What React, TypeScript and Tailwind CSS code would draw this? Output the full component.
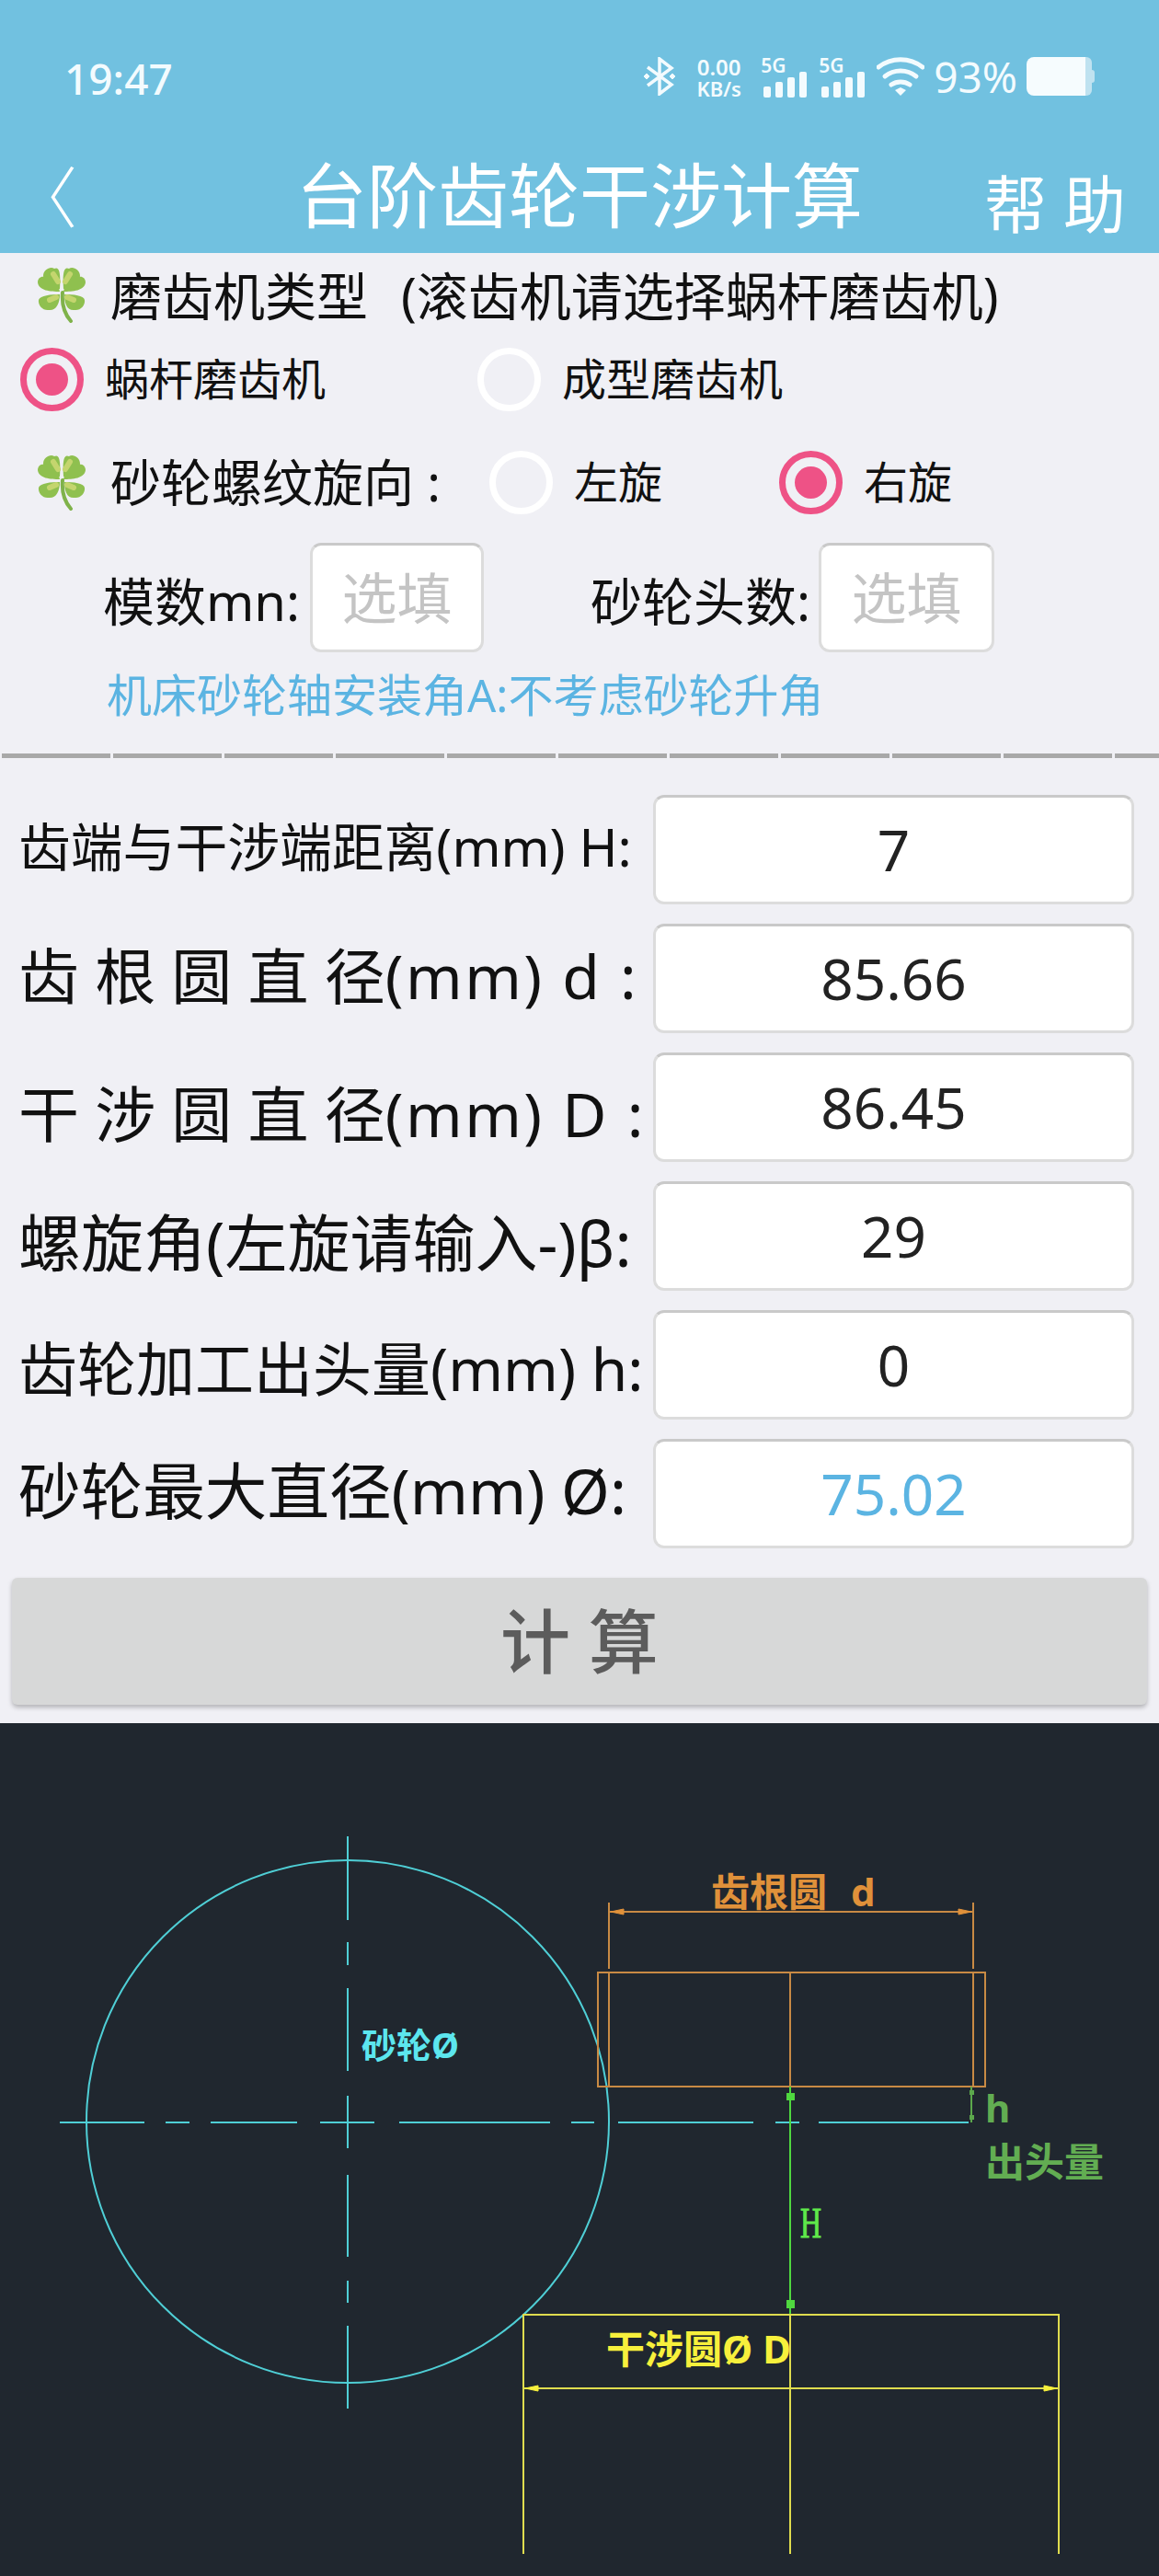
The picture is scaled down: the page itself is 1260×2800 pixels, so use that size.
const FONT = "font-['Noto_Sans','Noto_Sans_CJK_SC',sans-serif]";

const Clover = () => (
  <svg width="52" height="61" viewBox="0 0 52 61" className="shrink-0">
    <path d="M27 28 C26 40 28 50 36 59" fill="none" stroke="#7fb24a" strokeWidth="4" strokeLinecap="round" />
    <g>
      <path d="M24 24 C14 24 6 17 6 10 C6 3 14 -1 18 2 C24 -1 25 8 24 24Z" fill="#8fc04f" />
      <path d="M28 24 C38 24 46 17 46 10 C46 3 38 -1 34 2 C28 -1 27 8 28 24Z" fill="#8fc04f" />
      <path d="M24 27 C14 27 1 26 0 17 C0 12 4 10 7 11 C14 9 22 16 24 27Z" fill="#8fc04f" />
      <path d="M28 27 C38 27 51 26 52 17 C52 12 48 10 45 11 C38 9 30 16 28 27Z" fill="#8fc04f" />
      <path d="M24 30 C14 30 3 31 1 36 C0 42 6 48 12 47 C20 48 24 40 24 30Z" fill="#8fc04f" />
      <path d="M29 30 C39 30 50 31 51 36 C52 42 46 48 40 47 C32 48 29 40 29 30Z" fill="#8fc04f" />
      <path d="M17 8 L22 16 M13 36 L20 33 M35 8 L30 16 M39 36 L32 33" stroke="#c4d56e" strokeWidth="6" strokeLinecap="round" />
    </g>
  </svg>
);

const Radio = ({ on }: { on?: boolean }) => (
  <div
    className={
      on
        ? "w-[69px] h-[69px] shrink-0 rounded-full border-[7px] border-[#ee5286] bg-[#f0f0f5] flex items-center justify-center"
        : "w-[69px] h-[69px] shrink-0 rounded-full border-[7px] border-white bg-[#f0f0f5]"
    }
  >
    {on && <div className="w-[35px] h-[35px] rounded-full bg-[#ee5286]" />}
  </div>
);

const Bars = () => (
  <div className="w-[46px] relative h-[43px]">
    <span className="absolute left-0 top-[-1px] text-[21px] leading-[21px] font-semibold text-[#f3fbfe]">5G</span>
    <div className="absolute left-[3px] bottom-[-1px] flex items-end gap-[5px]">
      <div className="w-[8px] h-[12px] rounded-[2px] bg-[#f3fbfe]" />
      <div className="w-[8px] h-[17px] rounded-[2px] bg-[#f3fbfe]" />
      <div className="w-[8px] h-[22px] rounded-[2px] bg-[#f3fbfe]" />
      <div className="w-[8px] h-[28px] rounded-[2px] bg-[#f3fbfe]" />
    </div>
  </div>
);

const StatusBar = () => (
  <div className="h-[150px] pl-[70px] pr-[70px] pt-[60px] flex items-start justify-between text-[#f3fbfe]">
    <span className="text-[46px] leading-[50px] font-medium">19:47</span>
    <div className="flex items-center h-[46px]">
      <svg width="36" height="42" viewBox="0 0 36 42" fill="none" stroke="#f3fbfe" strokeWidth="3.5">
        <path d="M5 11 L31 30 L18 40 V2 L31 12 L5 31" />
        <path d="M1 21 L4 18 L7 21 L4 24Z M29 21 L32 18 L35 21 L32 24Z" fill="#f3fbfe" strokeWidth="1" />
      </svg>
      <div className="ml-[20px] w-[53px] flex flex-col items-center font-semibold">
        <span className="text-[24px] leading-[25px]">0.00</span>
        <span className="text-[22px] leading-[22px]">KB/s</span>
      </div>
      <div className="ml-[19px]"><Bars /></div>
      <div className="ml-[17px]"><Bars /></div>
      <svg className="ml-[17px]" width="52" height="42" viewBox="0 0 52 42" fill="none" stroke="#f3fbfe" strokeWidth="5" strokeLinecap="round">
        <path d="M2 11 C16 0 36 0 50 11" />
        <path d="M9 21 C19 13 33 13 43 21" />
        <path d="M16 30 C22 26 30 26 36 30" />
        <path d="M20 36 L26 33 L32 36 L26 42Z" fill="#f3fbfe" stroke="none" />
      </svg>
      <span className="ml-[10px] text-[46px] leading-[46px]">93%</span>
      <div className="ml-[10px] flex items-center">
        <div className="w-[64px] h-[42px] rounded-l-[8px] bg-[#f6fcfe]" />
        <div className="w-[7px] h-[42px] rounded-r-[6px] bg-[#bfe2f0]" />
        <div className="w-[3px] h-[14px] rounded-r-[3px] bg-[#bfe2f0]" />
      </div>
    </div>
  </div>
);

const Header = () => (
  <div className="h-[125px] relative flex items-start justify-center text-white">
    <span className="absolute left-[12px] top-[18px] text-[72px] leading-[90px] font-light">〈</span>
    <span className="text-[77px] leading-[126px]">台阶齿轮干涉计算</span>
    <span className="absolute right-[36px] top-[27px] text-[68px] leading-[90px]">帮 助</span>
  </div>
);

// nudge = per-row text offset, the labels don't sit centred in the reference
const fieldRows = [
  { label: "齿端与干涉端距离(mm) H:", value: "7", size: "text-[56.8px]", nudge: "pb-[6px]" },
  { label: "齿 根 圆 直 径", tail: "(mm) d :", value: "85.66", size: "text-[66px]", nudge: "pb-[6px]" },
  { label: "干 涉 圆 直 径", tail: "(mm) D :", value: "86.45", size: "text-[66px]", nudge: "pt-[14px]" },
  { label: "螺旋角(左旋请输入-)β:", value: "29", size: "text-[68px]", nudge: "pt-[14px]" },
  { label: "齿轮加工出头量(mm) h:", value: "0", size: "text-[64px]", nudge: "pt-[8px]" },
  { label: "砂轮最大直径(mm) Ø:", value: "75.02", size: "text-[67.6px]", nudge: "pb-[6px]", blue: true },
];

const InputBox = ({ className, children }: { className: string; children: React.ReactNode }) => (
  <div className={"bg-white rounded-[12px] border-[3px] border-[#dcdcdc] border-t-[#c9c9c9] flex items-center justify-center " + className}>
    {children}
  </div>
);

const DashedRule = () => (
  <div className="h-[5px] mt-[34px] flex gap-[3px] pl-[2px] overflow-hidden">
    {Array.from({ length: 11 }).map((_, i) => (
      <div key={i} className="w-[118px] h-[5px] shrink-0 bg-[#a8a8a8]" />
    ))}
  </div>
);

const Form = () => (
  <div className="h-[1598px] bg-[#f0f0f5] text-[#111]">
    <div className="h-[97px] pl-[41px] pt-[15px] flex items-start">
      <Clover />
      <span className="ml-[27px] text-[56px] leading-[62px] whitespace-pre">
        磨齿机类型<span className="ml-[36px]">(滚齿机请选择蜗杆磨齿机)</span>
      </span>
    </div>
    <div className="h-[80px] pl-[22px] flex items-center">
      <Radio on />
      <span className="ml-[23px] w-[405px] text-[48px]">蜗杆磨齿机</span>
      <Radio />
      <span className="ml-[23px] text-[48px]">成型磨齿机</span>
    </div>
    <div className="mt-[37px] h-[70px] pl-[41px] flex items-center">
      <Clover />
      <span className="ml-[27px] w-[412px] text-[55px] leading-[62px]">砂轮螺纹旋向 :</span>
      <Radio />
      <span className="ml-[23px] w-[223px] text-[48px]">左旋</span>
      <Radio on />
      <span className="ml-[23px] text-[48px]">右旋</span>
    </div>
    <div className="mt-[31px] h-[119px] pl-[112px] flex items-center">
      <span className="w-[225px] pt-[6px] text-[56px]">模数mn:</span>
      <InputBox className="w-[189px] h-[119px] text-[60px] text-[#c4c4c4]">选填</InputBox>
      <span className="ml-[116px] w-[248px] pt-[6px] text-[56px]">砂轮头数:</span>
      <InputBox className="w-[191px] h-[119px] text-[60px] text-[#c4c4c4]">选填</InputBox>
    </div>
    <div className="mt-[16px] pl-[116px] text-[49px] leading-[60px] text-[#5bb4e2]">机床砂轮轴安装角A:不考虑砂轮升角</div>
    <DashedRule />
    <div className="mt-[40px] pl-[20px] pr-[27px] flex flex-col gap-[21px]">
      {fieldRows.map((row) => (
        <div key={row.label} className="h-[119px] flex items-center justify-between">
          <span className={row.size + " " + row.nudge + " whitespace-pre"}>
            {row.label}
            {row.tail && <span className="tracking-[2.5px]">{row.tail}</span>}
          </span>
          <InputBox className={"w-[523px] h-[119px] text-[62px] " + (row.blue ? "text-[#5bb4e2]" : "text-[#222]")}>{row.value}</InputBox>
        </div>
      ))}
    </div>
    <div className="mt-[32px] mx-[13px] h-[138px] rounded-[6px] bg-[#d7d8d8] shadow-[0_3px_5px_rgba(0,0,0,0.25)] flex items-center justify-center text-[76px] font-medium text-[#5c5c5c]">
      计 算
    </div>
  </div>
);

const cyanV = ["M378 1996V2087", "M378 2111V2136", "M378 2161V2251", "M378 2278V2335", "M378 2364V2453", "M378 2479V2503", "M378 2528V2618"];
const cyanH = [[65, 157], [180, 206], [229, 323], [348, 407], [434, 598], [621, 646], [672, 819], [843, 869], [890, 1053]];

const Drawing = () => (
  <div className="h-[927px] bg-[#20272f]">
    <svg width="1260" height="927" viewBox="0 1873 1260 927" fill="none" className="block">
      {/* wheel */}
      <g stroke="#4fcfd6" strokeWidth="2">
        <circle cx="378" cy="2306" r="284" />
        {cyanV.map((d) => <path key={d} d={d} />)}
        {cyanH.map(([a, b]) => <path key={a} d={`M${a} 2307H${b}`} />)}
      </g>
      <text x="393" y="2237" fontSize="38" fontWeight="700" fill="#5ce6ee">砂轮Ø</text>

      {/* gear */}
      <g stroke="#c88a44" strokeWidth="2">
        <rect x="650" y="2144" width="421" height="124" />
        <path d="M662 2068V2140M1058 2068V2140M662 2078H1058M662 2144V2268M859 2144V2268M1058 2144V2268" />
      </g>
      <path d="M664 2078L678 2075V2081ZM1056 2078L1042 2075V2081Z" fill="#e0913a" stroke="#e0913a" />
      <text x="773" y="2072" fontSize="42" fontWeight="700" fill="#e0913a">
        齿根圆<tspan dx="26">d</tspan>
      </text>

      {/* distance H */}
      <path d="M859 2268V2516" stroke="#4fd83f" strokeWidth="2" />
      <path d="M855 2275H864V2283H855ZM855 2500H864V2509H855Z" fill="#4fd83f" />
      <text x="870" y="2432" fontSize="46" textLength="23" lengthAdjust="spacingAndGlyphs" fontFamily="'Liberation Serif',serif" fill="#5fe84a" stroke="#5fe84a" strokeWidth="1">H</text>

      {/* overhang h */}
      <path d="M1056 2268V2307" stroke="#5ca84c" strokeWidth="2" />
      <path d="M1054 2272H1059V2277H1054ZM1054 2299H1059V2304H1054Z" fill="#5ca84c" />
      <text x="1071" y="2307" fontSize="42" fontWeight="700" fill="#62ad52">h</text>
      <text x="1071" y="2366" fontSize="43" fontWeight="700" fill="#62ad52">出头量</text>

      {/* interference circle */}
      <g stroke="#dfdc4e" strokeWidth="2">
        <path d="M569 2776V2516H1151V2776M859 2516V2776M569 2596H1151" />
      </g>
      <path d="M571 2596L585 2593V2599ZM1149 2596L1135 2593V2599Z" fill="#f7f03c" stroke="#f7f03c" />
      <text x="659" y="2569" fontSize="42" fontWeight="700" fill="#f7f03c">干涉圆Ø D</text>
    </svg>
  </div>
);

export default function App() {
  return (
    <div className={"w-[1260px] h-[2800px] overflow-hidden " + FONT}>
      <div className="bg-[#71c1e0]">
        <StatusBar />
        <Header />
      </div>
      <Form />
      <Drawing />
    </div>
  );
}
